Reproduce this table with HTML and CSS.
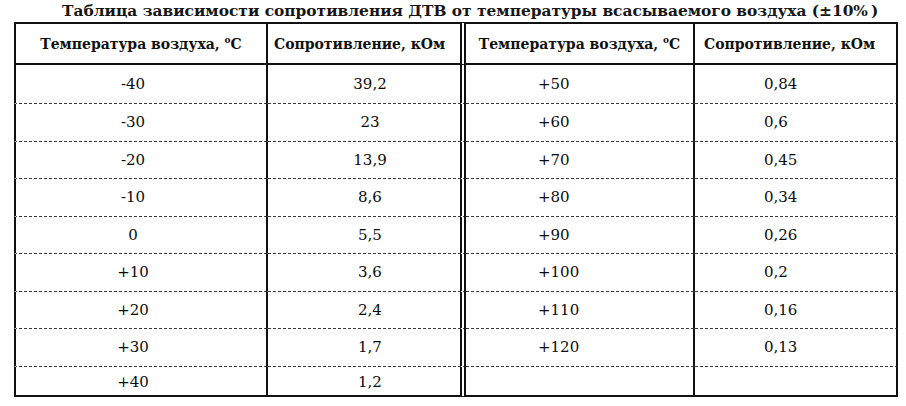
FILE: index.html
```html
<!DOCTYPE html>
<html lang="ru">
<head>
<meta charset="utf-8">
<title>Таблица ДТВ</title>
<link rel="stylesheet" href="styles.css">
</head>
<body>
<h1 class="title">Таблица зависимости сопротивления ДТВ от температуры всасываемого воздуха (±10%&#8201;)</h1>
<table class="tbl">
  <thead>
    <tr>
      <th class="c1">Температура воздуха, <sup>о</sup>С</th>
      <th class="c2">Сопротивление, кОм</th>
      <th class="c3">Температура воздуха, <sup>о</sup>С</th>
      <th class="c4">Сопротивление, кОм</th>
    </tr>
  </thead>
  <tbody>
    <tr class="first"><td class="c1">-40</td><td class="c2">39,2</td><td class="c3">+50</td><td class="c4">0,84</td></tr>
    <tr><td class="c1">-30</td><td class="c2">23</td><td class="c3">+60</td><td class="c4">0,6</td></tr>
    <tr><td class="c1">-20</td><td class="c2">13,9</td><td class="c3">+70</td><td class="c4">0,45</td></tr>
    <tr><td class="c1">-10</td><td class="c2">8,6</td><td class="c3">+80</td><td class="c4">0,34</td></tr>
    <tr><td class="c1">0</td><td class="c2">5,5</td><td class="c3">+90</td><td class="c4">0,26</td></tr>
    <tr><td class="c1">+10</td><td class="c2">3,6</td><td class="c3">+100</td><td class="c4">0,2</td></tr>
    <tr><td class="c1">+20</td><td class="c2">2,4</td><td class="c3">+110</td><td class="c4">0,16</td></tr>
    <tr><td class="c1">+30</td><td class="c2">1,7</td><td class="c3">+120</td><td class="c4">0,13</td></tr>
    <tr class="last"><td class="c1">+40</td><td class="c2">1,2</td><td class="c3"></td><td class="c4"></td></tr>
  </tbody>
</table>
</body>
</html>
```
FILE: styles.css
```css
html, body {
  margin: 0;
  padding: 0;
  background: #fff;
  color: #111;
  font-family: "DejaVu Serif", "Liberation Serif", serif;
}

.title {
  margin: 0;
  height: 22px;
  padding-left: 62px;
  font-size: 15.4px;
  line-height: 22px;
  font-weight: bold;
  white-space: nowrap;
  color: #151515;
}

.tbl {
  margin-left: 14px;
  border-collapse: separate;
  border-spacing: 0;
  table-layout: fixed;
}

.tbl th,
.tbl td {
  padding: 0;
  box-sizing: content-box;
}

.tbl th {
  height: 39px;
  border-top: 2px solid #111;
  border-bottom: 2px solid #111;
  font-size: 14px;
  font-weight: bold;
  text-align: left;
  white-space: nowrap;
}

.tbl th sup {
  font-size: 9px;
  vertical-align: 6px;
  line-height: 0;
}

.tbl td {
  height: 36.5px;
  font-size: 15px;
  text-align: left;
  color: #0c0c0c;
  background-image: repeating-linear-gradient(to right, #3a3a3a 0 3px, transparent 3px 5px);
  background-size: 100% 1px;
  background-position: left bottom;
  background-repeat: no-repeat;
  border-bottom: 1px solid transparent;
  background-origin: border-box;
  background-clip: border-box;
}

.tbl tr.first td {
  height: 38px;
}

.tbl tr.last td {
  height: 28.5px;
  padding-top: 2px;
  background-image: none;
  border-bottom: 2px solid #111;
}

.c1 {
  width: 250px;
  border-left: 2px solid #111;
  border-right: 2px solid #111;
}
.c2 {
  width: 192px;
  border-right: 6px double #111;
}
.c3 {
  width: 227px;
  border-right: 2px solid #111;
}
.c4 {
  width: 201px;
  border-right: 2px solid #111;
}

.tbl td.c1 { text-align: center; padding-right: 16px; width: 234px; }
.tbl td.c2 { text-align: center; padding-left: 12px; width: 180px; }
.tbl td.c3 { padding-left: 72px; width: 155px; }
.tbl td.c4 { padding-left: 69px; width: 132px; }

.tbl tr.last td { height: 26.5px; }

.tbl th.c1 { text-align: center; }
.tbl th.c2 { padding-left: 6px; width: 186px; }
.tbl th.c3 { text-align: center; }
.tbl th.c4 { padding-left: 9px; width: 192px; }
```
